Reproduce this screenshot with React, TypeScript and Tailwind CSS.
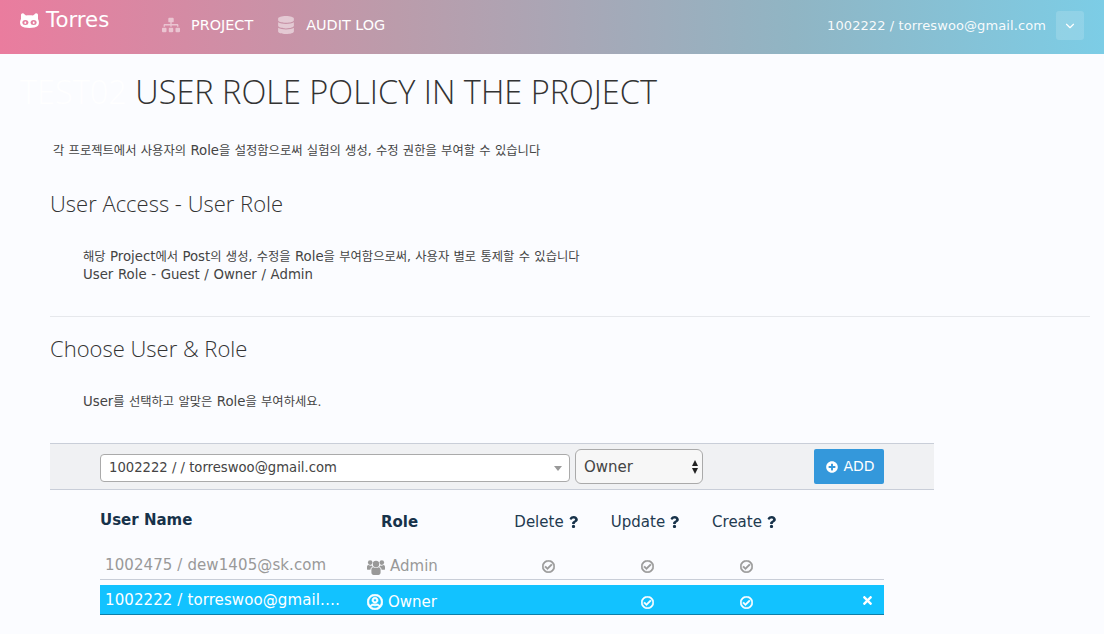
// App.tsx
import React from 'react';
import { ChevronDown } from 'lucide-react';
import { FaSitemap, FaDatabase, FaRegUserCircle, FaRegCheckCircle, FaPlusCircle, FaTimes, FaQuestion } from 'react-icons/fa';

const BODY = "font-['DejaVu_Sans','Noto_Sans_CJK_KR',sans-serif]";
const HEAD = "font-['Open_Sans','Noto_Sans_CJK_KR',sans-serif] font-light";

type Row = {
  name: string;
  role: string;
  icon: React.ReactNode;
  checks: boolean[];
  active: boolean;
};

const UsersIcon = () => (
  <svg viewBox="0 0 18 16" className="w-[18px] h-[16px]" fill="currentColor">
    <circle cx="9" cy="5" r="3.2" />
    <circle cx="3.2" cy="3.6" r="2.3" />
    <circle cx="14.8" cy="3.6" r="2.3" />
    <path d="M4.4 10.6 C4.4 9 5.2 8.4 6.4 8.2 C7.6 9 10.4 9 11.6 8.2 C12.8 8.4 13.6 9 13.6 10.6 L13.6 13.6 C13.6 15 12.6 16 11.4 16 L6.6 16 C5.4 16 4.4 15 4.4 13.6 Z" />
    <path d="M0 8 C0 6.8 .6 6 1.6 6 C2.6 6.8 3.8 6.8 4.6 6.6 C5 7.2 5.2 7.4 5.8 7.7 C4.2 8.2 3.4 9.2 3.4 10.8 L0.9 10.8 C.4 10.8 0 10.4 0 9.9 Z" />
    <path d="M18 8 C18 6.8 17.4 6 16.4 6 C15.4 6.8 14.2 6.8 13.4 6.6 C13 7.2 12.8 7.4 12.2 7.7 C13.8 8.2 14.6 9.2 14.6 10.8 L17.1 10.8 C17.6 10.8 18 10.4 18 9.9 Z" />
  </svg>
);

const rows: Row[] = [
  {
    name: '1002475 / dew1405@sk.com',
    role: 'Admin',
    icon: <UsersIcon />,
    checks: [true, true, true],
    active: false,
  },
  {
    name: '1002222 / torreswoo@gmail.com',
    role: 'Owner',
    icon: <FaRegUserCircle className="w-[16px] h-[16px] stroke-[24px]" />,
    checks: [false, true, true],
    active: true,
  },
];

// latin runs are a bit bigger than the hangul around them in the reference
const En = ({ children }: { children: React.ReactNode }) => <span className="text-[13.3px]">{children}</span>;

const CatLogo = () => (
  <svg viewBox="0 0 19 15" className="w-[19px] h-[15px]" fill="currentColor">
    <path d="M1 2.2 C1 .6 2.6 -.2 3.8 .7 L6 2.5 C7.8 2.1 11.2 2.1 13 2.5 L15.2 .7 C16.4 -.2 18 .6 18 2.2 L18 6 C19.3 8 19.3 11 18 12.8 C16.6 14.6 13 15 9.5 15 C6 15 2.4 14.6 1 12.8 C-.3 11 -.3 8 1 6 Z" />
    <ellipse cx="5.4" cy="9.6" rx="3" ry="2.5" fill="#e67e9f" />
    <ellipse cx="13.6" cy="9.6" rx="3" ry="2.5" fill="#e37f9f" />
    <rect x="4.4" y="8.4" width="1.8" height="2.4" rx=".9" />
    <rect x="12.8" y="8.4" width="1.8" height="2.4" rx=".9" />
  </svg>
);

const HeaderCell = ({ label }: { label: string }) => (
  <div className="w-[99px] pr-[3px] flex items-center justify-center gap-[5px] text-[15px] text-[#1f3a50]">
    {label}
    <FaQuestion className="w-[9px] h-[12px] text-[#17324a]" />
  </div>
);

const App: React.FC = () => {
  return (
    <div className={`${BODY} w-[1104px] h-[634px] overflow-hidden bg-[#fbfcff] text-[#444]`}>
      <header className="h-[54px] flex items-start justify-between bg-[linear-gradient(90deg,#ea7c9e,#bb9cab_36%,#90b5c4_72%,#7ccde6)] text-white">
        <div className="flex items-start">
          <div className="flex items-center gap-[7px] pl-[20px] pt-[7px] w-[162px] text-[21.3px] leading-[26px]">
            <CatLogo />
            <span>Torres</span>
          </div>
          <nav className="flex items-center pt-[15px] text-[14.4px] leading-[20px]">
            <FaSitemap className="w-[18px] h-[16px] text-white/50" />
            <span className="ml-[11px]">PROJECT</span>
            <FaDatabase className="ml-[25px] w-[16px] h-[18px] text-white/50" />
            <span className="ml-[12px]">AUDIT LOG</span>
          </nav>
        </div>
        <div className="flex items-center pt-[11px] pr-[20px]">
          <span className="text-[13px] tracking-[0.1px] text-white/95">1002222 / torreswoo@gmail.com</span>
          <button className="ml-[10px] w-[28px] h-[29px] rounded-[3px] bg-white/15 flex items-center justify-center">
            <ChevronDown className="w-[14px] h-[14px]" strokeWidth={2} />
          </button>
        </div>
      </header>

      <main className="pl-[50px]">
        <h1 className={`${HEAD} pt-[15px] -ml-[30px] text-[32.5px] leading-[46px] text-[#333] whitespace-nowrap`}>
          <span className="text-white">TEST02</span> USER ROLE POLICY IN THE PROJECT
        </h1>
        <p className="mt-[27px] ml-[3px] text-[12.3px] leading-[18px] [word-spacing:0.4px]">
          각 프로젝트에서 사용자의 <En>Role</En>을 설정함으로써 실험의 생성, 수정 권한을 부여할 수 있습니다
        </p>

        <h2 className={`${HEAD} mt-[28px] text-[22px] leading-[30px] text-[#333]`}>User Access - User Role</h2>
        <p className="mt-[30px] ml-[33px] text-[12.3px] leading-[18px] [word-spacing:0.4px]">
          해당 <En>Project</En>에서 <En>Post</En>의 생성, 수정을 <En>Role</En>을 부여함으로써, 사용자 별로 통제할 수 있습니다
          <br />
          <En>User Role - Guest / Owner / Admin</En>
        </p>

        <hr className="mt-[32px] w-[1040px] border-[#e6e8ec]" />

        <h2 className={`${HEAD} mt-[16px] text-[22px] leading-[30px] text-[#333]`}>Choose User &amp; Role</h2>
        <p className="mt-[30px] ml-[33px] text-[12.3px] leading-[18px] [word-spacing:0.4px]">
          <En>User</En>를 선택하고 알맞은 <En>Role</En>을 부여하세요.
        </p>

        <div className="mt-[32px] w-[884px] h-[47px] flex items-start pl-[50px] bg-[#f0f1f3] border-y border-[#c9ced8]">
          <div className="mt-[10px] w-[470px] h-[28px] flex items-center justify-between pl-[8px] pr-[7px] bg-white border border-[#aaa] rounded-[4px] text-[13.2px]">
            <span>1002222 / / torreswoo@gmail.com</span>
            <span className="w-0 h-0 border-x-[4px] border-x-transparent border-t-[5px] border-t-[#999]" />
          </div>
          <div className="mt-[5px] ml-[5px] w-[128px] h-[35px] flex items-center justify-between pl-[8px] pr-[4px] pt-[1px] bg-[#f7f7f7] border border-[#aaa] rounded-[6px] text-[15px]">
            <span>Owner</span>
            <span className="flex flex-col gap-[2px]">
              <span className="w-0 h-0 border-x-[3px] border-x-transparent border-b-[6px] border-b-[#222]" />
              <span className="w-0 h-0 border-x-[3px] border-x-transparent border-t-[6px] border-t-[#222]" />
            </span>
          </div>
          <button className="mt-[5px] ml-[111px] w-[70px] h-[35px] pl-[3px] flex items-center justify-center gap-[5px] bg-[#3498db] rounded-[2px] text-white text-[14px]">
            <FaPlusCircle className="w-[12px] h-[12px]" />
            ADD
          </button>
        </div>

        <div className="ml-[50px] w-[784px]">
          <div className="flex items-start h-[55px]">
            <div className="w-[281px] pt-[20px] text-[15px] leading-[20px] font-bold text-[#17324a]">User Name</div>
            <div className="w-[117px] pt-[22px] text-[15px] leading-[20px] font-bold text-[#17324a]">Role</div>
            <div className="flex pt-[22px] leading-[20px]">
              <HeaderCell label="Delete" />
              <HeaderCell label="Update" />
              <HeaderCell label="Create" />
            </div>
          </div>
          {rows.map((row) => (
            <div
              key={row.name}
              className={
                row.active
                  ? 'mt-[5px] h-[30px] pt-[5px] flex items-center bg-[#12c2ff] text-white border-b border-[#0e7fa8]'
                  : 'h-[35px] pt-[9px] flex items-center text-[#999] border-b border-[#c9ced8]'
              }
            >
              <div className="w-[267px] pl-[5px] pr-[26px] pb-[3px] text-[15px] tracking-[0.1px] leading-[17px] truncate">{row.name}</div>
              <div className="w-[132px] flex items-center gap-[5px] text-[15px]">
                {row.icon}
                {row.role}
              </div>
              <div className="flex">
                {row.checks.map((on, i) => (
                  <div key={i} className="w-[99px] flex justify-center">
                    {on && <FaRegCheckCircle className="w-[13px] h-[13px] stroke-[24px]" />}
                  </div>
                ))}
              </div>
              {row.active && (
                <div className="ml-auto pr-[10px] pb-[3px]">
                  <FaTimes className="w-[13px] h-[13px]" />
                </div>
              )}
            </div>
          ))}
        </div>
      </main>
    </div>
  );
};

export default App;
